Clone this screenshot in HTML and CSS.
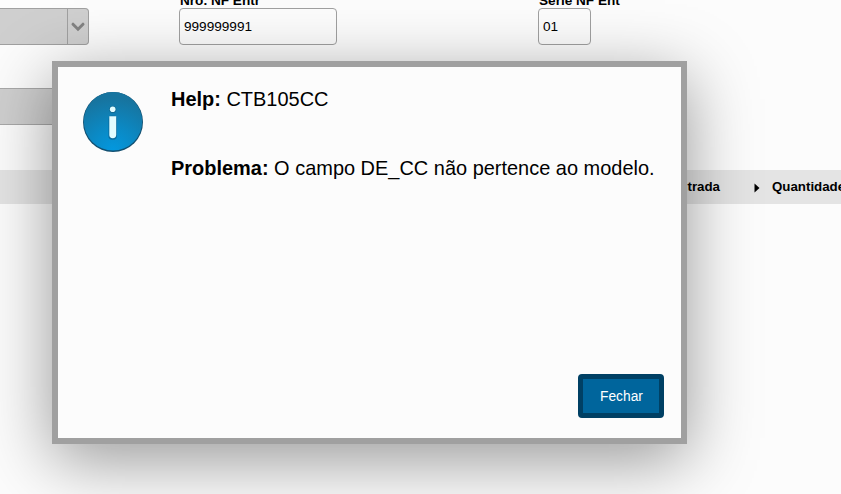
FILE: index.html
```
<!DOCTYPE html>
<html lang="pt-BR">
<head>
    <meta charset="UTF-8">
    <meta name="viewport" content="width=device-width, initial-scale=1.0">
    <title>Help</title>
    <link rel="stylesheet" href="styles.css">
</head>
<body>
    <div class="page">
        <div class="form-row">
            <div class="field field-select">
                <label>&nbsp;</label>
                <div class="select">
                    <span class="select-arrow">
                        <svg width="16" height="10" viewBox="0 0 16 10"><path d="M3 2.2l5 5 5-5" fill="none" stroke="#828282" stroke-width="3" stroke-linecap="round"/></svg>
                    </span>
                </div>
            </div>
            <div class="field field-number">
                <label for="nfEntr">Nro. NF Entr</label>
                <input type="text" id="nfEntr" value="999999991">
            </div>
            <div class="field field-serie">
                <label for="serieEnt">Serie NF Ent</label>
                <input type="text" id="serieEnt" value="01">
            </div>
        </div>
        <div class="disabled-box"></div>
        <div class="grid-header">
            <span class="col-entrada">Entrada</span>
            <svg class="col-arrow" width="6" height="10" viewBox="0 0 6 10"><path d="M0.5 0.5L5.5 5l-5 4.5z" fill="#000"/></svg>
            <span>Quantidade</span>
        </div>
    </div>

    <div class="dialog" role="dialog">
        <div class="dialog-body">
            <svg class="info-icon" width="60" height="60" viewBox="0 0 60 60">
                <defs>
                    <radialGradient id="infoFill" cx="0.5" cy="1" r="0.9">
                        <stop offset="0" stop-color="#0398df"/>
                        <stop offset="0.45" stop-color="#0b89c4"/>
                        <stop offset="1" stop-color="#17749f"/>
                    </radialGradient>
                </defs>
                <circle cx="30" cy="30" r="30" fill="#124f70"/>
                <circle cx="30" cy="29.3" r="29.2" fill="url(#infoFill)"/>
                <circle cx="29.8" cy="17.6" r="3.5" fill="#126991"/>
                <rect x="25.4" y="23.6" width="8.6" height="24.2" rx="4" fill="#0b6da0"/>
                <circle cx="29.7" cy="17.2" r="2.8" fill="#e2fcff"/>
                <path d="M26.3 24.2h6.9v18.6a3.45 3.45 0 0 1-6.9 0z" fill="#e2fcff"/>
            </svg>
            <div class="message">
                <p><b>Help:</b> CTB105CC</p>
                <p><b>Problema:</b> O campo DE_CC não pertence ao modelo.</p>
            </div>
        </div>
        <div class="dialog-footer">
            <button class="btn-close">Fechar</button>
        </div>
    </div>
</body>
</html>
```

FILE: styles.css
```
* {
    box-sizing: border-box;
}
body {
    margin: 0;
    height: 494px;
    overflow: hidden;
    background-color: #fcfcfc;
    color: #000;
    font-family: Arial, "Liberation Sans", sans-serif;
    font-size: 13.6px;
}
.page {
    height: 494px;
    overflow: hidden;
}
.form-row {
    display: flex;
    margin-top: -8px;
}
.field label {
    display: block;
    height: 16px;
    padding-left: 1px;
    line-height: 17px;
    font-weight: bold;
    white-space: nowrap;
}
.field-select {
    width: 89px;
    margin-right: 90px;
}
.field-number {
    width: 158px;
    margin-right: 201px;
}
.field-serie {
    width: 53px;
}
.field input {
    display: block;
    width: 100%;
    height: 37px;
    padding: 0 4px;
    border: 1px solid #a0a0a0;
    border-radius: 4px;
    background-color: #fcfcfc;
    font-family: inherit;
    font-size: 13.6px;
    color: #000;
}
.select {
    display: flex;
    justify-content: flex-end;
    height: 37px;
    border: 1px solid #a0a0a0;
    border-left: none;
    border-radius: 0 4px 4px 0;
    background-color: #cfcfcf;
}
.select-arrow {
    display: flex;
    align-items: center;
    justify-content: center;
    width: 21px;
    border-left: 1px solid #a0a0a0;
}
.disabled-box {
    width: 200px;
    height: 37px;
    margin-top: 43px;
    border: 1px solid #a8a8a8;
    border-left: none;
    background-color: #cfcfcf;
}
.grid-header {
    display: flex;
    align-items: center;
    height: 34px;
    margin-top: 45px;
    padding-bottom: 2px;
    background-color: #e4e4e4;
    font-size: 13.3px;
    font-weight: bold;
    white-space: nowrap;
}
.col-entrada {
    flex: none;
    width: 720px;
    text-align: right;
}
.col-arrow {
    flex: none;
    margin: 4px 12px 0 34px;
}
.dialog {
    position: absolute;
    top: 61px;
    left: 52px;
    display: flex;
    flex-direction: column;
    justify-content: space-between;
    width: 635px;
    height: 383px;
    border: 6px solid #a0a0a0;
    background-color: #fcfcfc;
    box-shadow: 0 16px 64px rgba(0, 0, 0, 0.4);
}
.dialog-body {
    display: flex;
    padding: 25px 0 0 25px;
}
.info-icon {
    flex: none;
    margin-right: 28px;
}
.message {
    margin-top: -5px;
    font-size: 19.97px;
    white-space: nowrap;
}
.message p {
    margin: 0 0 45px;
    line-height: 24px;
}
.dialog-footer {
    display: flex;
    justify-content: flex-end;
    padding: 0 17px 20px 0;
}
.btn-close {
    width: 86px;
    height: 44px;
    padding: 0 0 0 1px;
    border: 5px solid #004064;
    border-radius: 4px;
    background-color: #00659c;
    color: #fff;
    font-family: inherit;
    font-size: 13.8px;
}
```
